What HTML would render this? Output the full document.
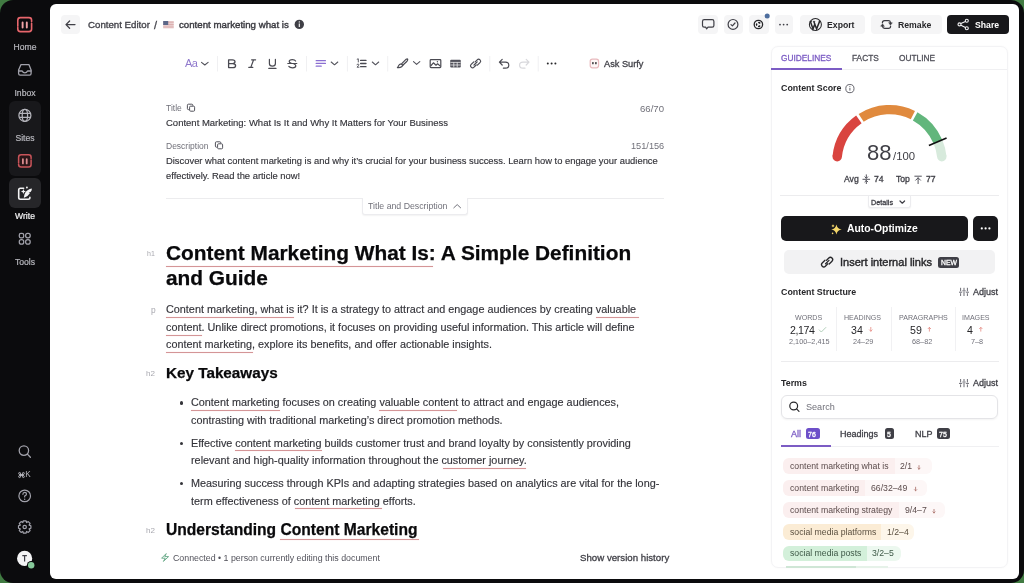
<!DOCTYPE html>
<html><head><meta charset="utf-8"><style>
html,body{margin:0;padding:0;width:1024px;height:583px;overflow:hidden;background:#417b42;}
#root{position:relative;width:1024px;height:583px;overflow:hidden;font-family:"Liberation Sans",sans-serif;}
.t{position:absolute;white-space:nowrap;line-height:1;will-change:transform;}
.a{position:absolute;}
.frame{position:absolute;left:0;top:0;width:1024px;height:583px;background:#0b0b0d;border-radius:13px;}
.panel{position:absolute;left:50px;top:4px;width:969px;height:575px;background:#fff;border-radius:6px;}
.sbbox{position:absolute;left:9px;width:31.5px;background:#18181b;border-radius:6px;}
.ib{position:absolute;top:15px;height:18.5px;background:#f5f5f6;border-radius:4px;}
.ul{position:absolute;height:1.3px;background:#d49597;box-shadow:0 0 1px rgba(240,140,140,0.5);}
.card{position:absolute;left:770.5px;top:46px;width:237px;height:522px;border:1px solid #f3f3f5;border-radius:7px;box-sizing:border-box;box-shadow:0 0 2px rgba(0,0,0,0.035);}
.sep{position:absolute;height:1px;background:#ececee;}
svg{position:absolute;overflow:visible;}
.pill{position:absolute;height:15.5px;border-radius:6px;overflow:hidden;}
.pill .l{position:absolute;left:0;top:0;bottom:0;}
.pill .r{position:absolute;top:0;bottom:0;right:0;}
.badge{position:absolute;height:10.5px;border-radius:2.5px;}

</style></head><body><div id="root">
<div class="frame"></div>
<div class="panel"></div>
<!-- sidebar boxes -->
<div class="sbbox" style="top:100.5px;height:75px;"></div>
<div class="sbbox" style="top:178px;height:30px;background:#262629;"></div>
<!-- header back btn -->
<div class="ib" style="left:61px;width:19px;"></div>
<!-- icon buttons -->
<div class="ib" style="left:698px;width:19.5px;"></div>
<div class="ib" style="left:723.5px;width:19.5px;"></div>
<div class="ib" style="left:749px;width:19.5px;"></div>
<div class="ib" style="left:774.5px;width:18.5px;"></div>
<div class="ib" style="left:799.5px;width:65px;"></div>
<div class="ib" style="left:870.5px;width:71px;"></div>
<div class="ib" style="left:947px;width:62px;top:14.8px;height:19.6px;background:#18181b;border-radius:4px;"></div>
<!-- title desc separator -->
<div class="sep" style="left:166px;top:197.5px;width:498px;"></div>
<div class="a" style="left:362px;top:198px;width:105.5px;height:16.5px;background:#fff;border:1px solid #ececef;border-top:none;box-sizing:border-box;border-radius:0 0 3px 3px;box-shadow:0 1px 1.5px rgba(0,0,0,0.05);"></div>
<!-- card -->
<div class="card"></div>
<div class="sep" style="left:771px;top:68.5px;width:236px;background:#f0f0f2;"></div>
<div class="a" style="left:770.5px;top:67.5px;width:71.5px;height:2px;background:#7c5cc4;"></div>
<div class="sep" style="left:779.5px;top:195px;width:219px;"></div>
<div class="a" style="left:868px;top:195.5px;width:43px;height:12.8px;background:#fff;border:1px solid #ececef;border-top:none;box-sizing:border-box;border-radius:0 0 3px 3px;box-shadow:0 1px 1.5px rgba(0,0,0,0.05);"></div>
<div class="a" style="left:780.5px;top:216px;width:187.5px;height:24.7px;background:#18181b;border-radius:5px;"></div>
<div class="a" style="left:973.3px;top:216px;width:24.7px;height:24.7px;background:#18181b;border-radius:5px;"></div>
<div class="a" style="left:783.6px;top:249.7px;width:211px;height:24.6px;background:#f2f2f3;border-radius:5px;"></div>
<div class="badge" style="left:938px;top:257.2px;width:21.2px;background:#3f3f46;"></div>
<div class="sep" style="left:836px;top:307px;width:1px;height:44px;background:#f1f1f3;"></div>
<div class="sep" style="left:890.5px;top:307px;width:1px;height:44px;background:#f1f1f3;"></div>
<div class="sep" style="left:954.5px;top:307px;width:1px;height:44px;background:#f1f1f3;"></div>
<div class="sep" style="left:780.5px;top:360.5px;width:218px;"></div>
<div class="a" style="left:780.5px;top:394.8px;width:217.8px;height:24.6px;border:1px solid #e4e4e7;border-radius:6px;box-sizing:border-box;box-shadow:0 1px 2px rgba(0,0,0,0.05);"></div>
<div class="sep" style="left:780.5px;top:446px;width:218px;background:#f0f0f2;"></div>
<div class="a" style="left:780.5px;top:445px;width:50px;height:2px;background:#7c5cc4;"></div>
<div class="badge" style="left:806.3px;top:428px;width:13.6px;background:#6d4fc9;"></div>
<div class="badge" style="left:884.8px;top:428px;width:9.3px;background:#3f3f46;"></div>
<div class="badge" style="left:936.7px;top:428px;width:13.6px;background:#3f3f46;"></div>
<!-- pills -->
<div class="pill" style="left:783px;top:458px;width:149px;"><div class="l" style="width:112.4px;background:#fbefef;"></div><div class="r" style="left:112.4px;background:#fdf7f7;"></div></div>
<div class="pill" style="left:783px;top:480px;width:144.4px;"><div class="l" style="width:81.7px;background:#fbefef;"></div><div class="r" style="left:81.7px;background:#fdf7f7;"></div></div>
<div class="pill" style="left:783px;top:502px;width:162px;"><div class="l" style="width:116px;background:#fbefef;"></div><div class="r" style="left:116px;background:#fdf7f7;"></div></div>
<div class="pill" style="left:783px;top:524.3px;width:131.4px;"><div class="l" style="width:98.2px;background:#fbecd5;"></div><div class="r" style="left:98.2px;background:#fdf6ea;"></div></div>
<div class="pill" style="left:783px;top:545.6px;width:118.4px;"><div class="l" style="width:84px;background:#d3f0da;"></div><div class="r" style="left:84px;background:#ecf8ef;"></div></div>
<div class="a" style="left:786px;top:566.4px;width:70px;height:1.2px;background:#cfe6d6;"></div><div class="a" style="left:856px;top:566.4px;width:32px;height:1.2px;background:#e6f2e9;"></div>
<!-- underlines -->
<div class="ul" style="left:166px;top:265.8px;width:267px;"></div>
<div class="ul" style="left:166px;top:316.6px;width:128px;"></div>
<div class="ul" style="left:596.3px;top:316.6px;width:42.5px;"></div>
<div class="ul" style="left:166px;top:334.6px;width:35.5px;"></div>
<div class="ul" style="left:166px;top:351.8px;width:86.5px;"></div>
<div class="ul" style="left:280px;top:539.2px;width:139px;"></div>
<!-- list bullets -->
<div class="a" style="left:179.6px;top:401.4px;width:3.4px;height:3.4px;border-radius:50%;background:#34343a;"></div>
<div class="a" style="left:179.6px;top:441.7px;width:3.4px;height:3.4px;border-radius:50%;background:#34343a;"></div>
<div class="a" style="left:179.6px;top:481.8px;width:3.4px;height:3.4px;border-radius:50%;background:#34343a;"></div>
<div class="ul" style="left:191px;top:409.7px;width:88.5px;"></div>
<div class="ul" style="left:379.2px;top:409.7px;width:77.7px;"></div>
<div class="ul" style="left:235px;top:450.1px;width:87px;"></div>
<div class="ul" style="left:442.7px;top:468.1px;width:83px;"></div>
<div class="ul" style="left:295px;top:507.5px;width:86.7px;"></div>

<svg width="1024" height="583" viewBox="0 0 1024 583" style="left:0;top:0"><!-- sidebar logo home -->
<g fill="none" stroke="#e8666c" stroke-width="1.6" stroke-linecap="round">
  <path d="M17.8 26.2 V20.2 Q17.8 17.6 20.4 17.6 H29 Q31.6 17.6 31.6 20.2 V21.6"/>
  <path d="M31.6 23.2 V29 Q31.6 31.6 29 31.6 H20.4 Q17.8 31.6 17.8 29 V27.6"/>
  <path d="M22.6 22.4 V27.6 M26.8 22.4 V27.6" stroke-width="1.9" stroke="#f0a3a6"/>
</g>
<!-- inbox -->
<g fill="none" stroke="#a1a1aa" stroke-width="1.3" stroke-linejoin="round" stroke-linecap="round">
  <path d="M21 64.6 H28.9 L31.1 70 V73.6 Q31.1 75.2 29.5 75.2 H20.2 Q18.6 75.2 18.6 73.6 V70 Z"/>
  <path d="M18.8 71 H22.2 Q23 72.8 24.85 72.8 Q26.7 72.8 27.5 71 H31"/>
</g>
<!-- globe -->
<g fill="none" stroke="#b4b4bb" stroke-width="1.25">
  <circle cx="24.9" cy="115.4" r="6"/>
  <ellipse cx="24.9" cy="115.4" rx="2.7" ry="6"/>
  <path d="M19.2 113.4 H30.6 M19.2 117.4 H30.6"/>
</g>
<!-- logo small (sites) -->
<rect x="18.6" y="154.8" width="12.5" height="12.3" rx="2.5" fill="#2a1618"/>
<g fill="none" stroke="#c8545a" stroke-width="1.5" stroke-linecap="round">
  <path d="M18.6 163 V157.3 Q18.6 154.8 21.1 154.8 H28.6 Q31.1 154.8 31.1 157.3 V158.5"/>
  <path d="M31.1 159.9 V164.6 Q31.1 167.1 28.6 167.1 H21.1 Q18.6 167.1 18.6 164.6 V164.2"/>
  <path d="M22.9 159.2 V163.4 M26.7 159.2 V163.4" stroke-width="1.8" stroke="#d98a8e"/>
</g>
<!-- write icon -->
<g fill="none" stroke="#f4f4f5" stroke-width="1.6" stroke-linecap="round">
  <path d="M23.6 188.2 H20.4 Q18.7 188.2 18.7 189.9 V197.6 Q18.7 199.3 20.4 199.3 H28.2 Q29.9 199.3 29.9 197.6 V197.4"/>
</g>
<path d="M23.4 189 L24.1 190.8 L25.9 191.5 L24.1 192.2 L23.4 194 L22.7 192.2 L20.9 191.5 L22.7 190.8 Z" fill="#f4f4f5"/>
<circle cx="26.9" cy="187.5" r="0.95" fill="#f4f4f5"/>
<path d="M23.8 197.8 Q24.2 192.6 27.6 190.2 Q29.8 188.6 31.9 188.4 Q31.9 190.4 30.6 191.9 L28.6 192.5 L30 193.1 Q28.2 196.4 24.6 197.4 Z" fill="#f4f4f5"/>
<!-- tools -->
<g fill="none" stroke="#a1a1aa" stroke-width="1.25">
  <rect x="19.3" y="233.4" width="4.4" height="4.4" rx="1.6"/>
  <rect x="25.6" y="233.4" width="4.6" height="4.4" rx="2"/>
  <rect x="19.3" y="239.6" width="4.4" height="4.6" rx="2"/>
  <rect x="25.6" y="239.6" width="4.6" height="4.6" rx="2.2"/>
</g>
<!-- search -->
<g fill="none" stroke="#a1a1aa" stroke-width="1.3" stroke-linecap="round">
  <circle cx="23.9" cy="450.6" r="4.7"/>
  <path d="M27.4 454.1 L30.4 457.2"/>
</g>
<!-- help -->
<g fill="none" stroke="#a1a1aa" stroke-width="1.2" stroke-linecap="round">
  <circle cx="24.7" cy="495.9" r="5.8"/>
  <path d="M22.9 494.3 Q22.9 492.4 24.7 492.4 Q26.5 492.4 26.5 494.1 Q26.5 495.3 24.7 496 V497"/>
</g>
<circle cx="24.7" cy="499.2" r="0.7" fill="#a1a1aa"/>
<!-- gear -->
<g fill="none" stroke="#a1a1aa" stroke-width="1.2" stroke-linejoin="round">
  <path d="M23.4 520.8 H26 L26.6 522.6 L28.3 521.6 L30.1 523.4 L29.1 525.1 L30.9 525.7 V528.3 L29.1 528.9 L30.1 530.6 L28.3 532.4 L26.6 531.4 L26 533.2 H23.4 L22.8 531.4 L21.1 532.4 L19.3 530.6 L20.3 528.9 L18.5 528.3 V525.7 L20.3 525.1 L19.3 523.4 L21.1 521.6 L22.8 522.6 Z"/>
  <circle cx="24.7" cy="527" r="1.7"/>
</g>
<!-- avatar -->
<circle cx="24.6" cy="558.4" r="7.6" fill="#f4f4f5"/>
<path d="M22.3 555.6 H26.9 M24.6 555.6 V561.4" stroke="#3f3f46" stroke-width="1.2" fill="none"/>
<circle cx="31.2" cy="565.3" r="4.3" fill="#0b0b0d"/>
<circle cx="31.2" cy="565.3" r="3.2" fill="#86c99a"/>
<!-- header: back arrow -->
<g fill="none" stroke="#3f3f46" stroke-width="1.3" stroke-linecap="round" stroke-linejoin="round">
  <path d="M66 24.6 H75 M69.6 21 L66 24.6 L69.6 28.2"/>
</g>
<!-- flag -->
<rect x="163.2" y="21" width="10.5" height="7.4" fill="#e9cfcf"/>
<path d="M163.2 22.2 H173.7 M163.2 24.6 H173.7 M163.2 27 H173.7" stroke="#d9a9a9" stroke-width="0.9"/>
<rect x="163.2" y="21" width="5" height="4" fill="#5b6788"/>
<!-- info filled -->
<circle cx="299.3" cy="24.4" r="4.7" fill="#3f3f46"/>
<path d="M299.3 23.5 V27" stroke="#fff" stroke-width="1.1"/>
<circle cx="299.3" cy="21.9" r="0.65" fill="#fff"/>
<!-- chat bubble -->
<g fill="none" stroke="#3f3f46" stroke-width="1.2" stroke-linejoin="round">
  <path d="M704.2 19.7 H712.2 Q713.9 19.7 713.9 21.4 V25.4 Q713.9 27.1 712.2 27.1 H708 L706.6 28.8 L705.6 27.1 H704.2 Q702.5 27.1 702.5 25.4 V21.4 Q702.5 19.7 704.2 19.7 Z"/>
</g>
<!-- circle check -->
<g fill="none" stroke="#3f3f46" stroke-width="1.2" stroke-linecap="round" stroke-linejoin="round">
  <circle cx="733" cy="24.4" r="4.9"/>
  <path d="M731 24.6 L732.4 25.9 L735 23"/>
</g>
<!-- btn3 icon -->
<circle cx="758.4" cy="24.5" r="4.2" fill="none" stroke="#27272a" stroke-width="1.3"/>
<ellipse cx="759.3" cy="22.8" rx="1.3" ry="0.75" transform="rotate(25 759.3 22.8)" fill="#18181b"/>
<ellipse cx="756.6" cy="24.6" rx="1.3" ry="0.75" transform="rotate(90 756.6 24.6)" fill="#18181b"/>
<ellipse cx="759.2" cy="26.2" rx="1.3" ry="0.75" transform="rotate(-25 759.2 26.2)" fill="#18181b"/>
<circle cx="767.2" cy="16" r="2.5" fill="#4e6e9e"/>
<!-- more dots -->
<g fill="#3f3f46"><circle cx="780" cy="24.6" r="0.9"/><circle cx="783.6" cy="24.6" r="0.9"/><circle cx="787.2" cy="24.6" r="0.9"/></g>
<!-- WP logo -->
<circle cx="815.4" cy="24.5" r="6" fill="none" stroke="#27272a" stroke-width="1.05"/>
<path d="M810.4 21.6 L813 29 L815 23.4 M813.8 21.6 L816.6 29 L819.6 21.4" fill="none" stroke="#27272a" stroke-width="1.5" stroke-linejoin="miter"/>
<path d="M809.6 21.4 H812 M812.9 21.4 H815.2" stroke="#27272a" stroke-width="0.8"/>
<circle cx="819.7" cy="21.5" r="0.9" fill="#27272a"/>
<!-- remake icon -->
<g fill="none" stroke="#3a3a40" stroke-width="1.2" stroke-linecap="round" stroke-linejoin="round">
  <path d="M882.4 22.8 Q882.4 20.7 884.6 20.7 H888.4 Q890.2 20.7 890.6 22.6"/>
  <path d="M890.6 26.2 Q890.6 28.3 888.4 28.3 H884.6 Q882.8 28.3 882.4 26.4"/>
</g>
<path d="M888.6 22.6 L892.4 22.8 L890.4 25.2 Z" fill="#3a3a40" stroke="#3a3a40" stroke-width="0.4" stroke-linejoin="round"/>
<path d="M884.4 26.4 L880.6 26.2 L882.6 23.8 Z" fill="#3a3a40" stroke="#3a3a40" stroke-width="0.4" stroke-linejoin="round"/>
<!-- share icon -->
<g fill="none" stroke="#f4f4f5" stroke-width="1.1">
  <circle cx="966.8" cy="20.8" r="1.5"/><circle cx="959.5" cy="24.4" r="1.5"/><circle cx="966.8" cy="28.2" r="1.5"/>
  <path d="M960.9 23.6 L965.4 21.5 M960.9 25.2 L965.4 27.5"/>
</g>
<!-- toolbar -->
<g fill="none" stroke="#52525b" stroke-width="1.1" stroke-linecap="round" stroke-linejoin="round">
  <path d="M201.5 62.4 L204.8 65 L208.1 62.4"/>
  <path d="M331.2 62 L334.5 64.8 L337.8 62"/>
  <path d="M372.3 62 L375.5 64.8 L378.7 62"/>
  <path d="M413.5 61.6 L416.6 64.4 L419.8 61.6"/>
</g>
<g stroke="#f0f0f2" stroke-width="1"><path d="M217.5 56 V71.5 M306.5 56 V71.5 M347.4 56 V71.5 M387.7 56 V71.5 M489.8 56 V71.5 M538.2 56 V71.5"/></g>
<!-- B -->
<path d="M228.6 59.8 H232.4 Q235 59.8 235 61.8 Q235 63.5 232.6 63.6 Q235.6 63.7 235.6 65.7 Q235.6 67.6 232.8 67.6 H228.6 Z M228.6 63.6 H232.6" fill="none" stroke="#4a4a52" stroke-width="1.3" stroke-linejoin="round"/>
<!-- I -->
<path d="M251.6 59.8 H255.6 M248.8 67.4 H252.8 M253.6 59.8 L250.8 67.4" fill="none" stroke="#4a4a52" stroke-width="1.2" stroke-linecap="round"/>
<!-- U -->
<path d="M269.4 59.4 V63.6 Q269.4 66.2 272.4 66.2 Q275.4 66.2 275.4 63.6 V59.4 M268.8 68.4 H276" fill="none" stroke="#4a4a52" stroke-width="1.2" stroke-linecap="round"/>
<!-- S -->
<path d="M295.6 61 Q294.8 59.6 292.4 59.6 Q289.2 59.6 289.2 61.6 Q289.2 62.8 291 63.2 M294 64 Q295.8 64.6 295.8 65.8 Q295.8 67.8 292.6 67.8 Q289.8 67.8 288.8 66.4 M287.8 63.5 H296.8" fill="none" stroke="#4a4a52" stroke-width="1.2" stroke-linecap="round"/>
<!-- align -->
<path d="M316.2 60.7 H325.4 M316.2 63.4 H325.4 M316.2 66.2 H321.2" stroke="#8b6fd1" stroke-width="1.3" stroke-linecap="round"/>
<!-- list -->
<path d="M360.6 60.4 H366 M360.6 63.5 H366 M360.6 66.7 H366" stroke="#4a4a52" stroke-width="1.3" stroke-linecap="round"/>
<path d="M357.2 59.2 L358.3 58.8 V62 M357 64.8 Q357.2 64 358 64 Q358.9 64 358.9 64.8 Q358.9 65.4 357 67.2 H359" fill="none" stroke="#4a4a52" stroke-width="0.9" stroke-linecap="round" stroke-linejoin="round"/>
<!-- brush -->
<g fill="none" stroke="#4a4a52" stroke-width="1.2" stroke-linecap="round" stroke-linejoin="round">
  <path d="M402 63.4 L406.2 59.2 Q407.4 58.4 407.7 59.2 Q407.9 60 407 61.2 L402.8 65.2"/>
  <path d="M401.2 63.8 Q399.2 64 398.6 65.6 Q398.2 66.8 397.4 67.6 Q400 68 401.6 66.8 Q402.6 65.8 402.8 65.2 Z"/>
</g>
<!-- image -->
<g fill="none" stroke="#4a4a52" stroke-width="1.2" stroke-linejoin="round">
  <rect x="430.2" y="59.6" width="10.6" height="8" rx="0.8"/>
  <path d="M430.6 66 L433.4 62.8 L436 65.2 L437.6 63.8 L440.6 66.4"/>
</g>
<circle cx="437.4" cy="61.8" r="0.7" fill="#4a4a52"/>
<!-- table -->
<rect x="450.2" y="59.8" width="10.6" height="7.8" rx="1" fill="#52525b"/>
<path d="M450.4 62.4 H460.6 M450.4 65 H460.6 M453.8 62.4 V67.4 M457.2 62.4 V67.4" stroke="#fff" stroke-width="0.7"/>
<!-- link -->
<g fill="none" stroke="#4a4a52" stroke-width="1.2" stroke-linecap="round">
  <path d="M475.2 61.8 L477.2 59.8 Q478.6 58.4 480 59.8 Q481.4 61.2 480 62.6 L477.4 65.2"/>
  <path d="M476.2 65 L474 67.2 Q472.6 68.6 471.2 67.2 Q469.8 65.8 471.2 64.4 L473.8 61.8"/>
  <path d="M474 65 L477.2 61.8"/>
</g>
<!-- undo / redo -->
<g fill="none" stroke-width="1.2" stroke-linecap="round" stroke-linejoin="round">
  <path d="M502.2 59.4 L499.4 62.2 L502.2 65 M499.6 62.2 H505.4 Q508.8 62.2 508.8 65.2 Q508.8 68.2 505.4 68.2 H503.4" stroke="#4a4a52"/>
  <path d="M526.2 59.4 L529 62.2 L526.2 65 M528.8 62.2 H523 Q519.6 62.2 519.6 65.2 Q519.6 68.2 523 68.2 H525" stroke="#d8d8dc"/>
</g>
<g fill="#27272a"><circle cx="547.8" cy="63.6" r="1"/><circle cx="551.6" cy="63.6" r="1"/><circle cx="555.4" cy="63.6" r="1"/></g>
<!-- surfy -->
<rect x="590.2" y="59.2" width="8.4" height="8.6" rx="2.2" fill="#fdf6f6" stroke="#e8b9bd" stroke-width="1.2"/>
<rect x="592.2" y="61.9" width="1.4" height="2.4" rx="0.6" fill="#27272a"/>
<rect x="595.2" y="61.9" width="1.4" height="2.4" rx="0.6" fill="#27272a"/>
<!-- cmd glyph -->
<g fill="none" stroke="#b8b8be" stroke-width="0.9">
  <path d="M20.4 473.6 V476.4 M22.6 473.6 V476.4 M19.4 474.5 H23.6 M19.4 475.5 H23.6"/>
  <circle cx="19.6" cy="473.4" r="0.95"/><circle cx="23.4" cy="473.4" r="0.95"/>
  <circle cx="19.6" cy="476.6" r="0.95"/><circle cx="23.4" cy="476.6" r="0.95"/>
</g>
<!-- gauge -->
<path d="M837.19 156.70 A52.6 52.6 0 0 1 858.88 119.43" stroke="#d9443f" stroke-width="9.4" fill="none"/>
<circle cx="837.19" cy="156.70" r="4.7" fill="#d9443f"/>
<path d="M861.16 117.89 A52.6 52.6 0 0 1 912.89 115.09" stroke="#e08a3e" stroke-width="9.4" fill="none"/>
<path d="M915.16 116.28 A52.6 52.6 0 0 1 937.92 141.65" stroke="#62b67c" stroke-width="9.4" fill="none"/>
<path d="M937.92 141.65 A52.6 52.6 0 0 1 941.81 156.70" stroke="#d7eadc" stroke-width="9.4" fill="none"/>
<circle cx="941.81" cy="156.70" r="4.7" fill="#d7eadc"/>
<path d="M928.90 145.48 L946.57 137.97" stroke="#111" stroke-width="1.6"/><!-- copy icons -->
<g fill="none" stroke="#52525b" stroke-width="1" stroke-linejoin="round">
  <path d="M189 109.6 H188.4 Q187.4 109.6 187.4 108.6 V105.2 Q187.4 104.2 188.4 104.2 H191.8 Q192.8 104.2 192.8 105.2 V105.8"/>
  <rect x="189.6" y="106.2" width="5" height="5" rx="1"/>
  <path d="M217 147.2 H216.4 Q215.4 147.2 215.4 146.2 V142.8 Q215.4 141.8 216.4 141.8 H219.8 Q220.8 141.8 220.8 142.8 V143.4"/>
  <rect x="217.6" y="143.8" width="5" height="5" rx="1"/>
</g>
<!-- pill chevron up -->
<path d="M453.8 207.8 L457.2 204.6 L460.6 207.8" fill="none" stroke="#71717a" stroke-width="1" stroke-linecap="round" stroke-linejoin="round"/>
<!-- lightning -->
<path d="M166.2 553.6 L161.6 558.2 H165.2 L163.4 561.4 L168.6 556.6 H164.8 Z" fill="none" stroke="#6fae8e" stroke-width="1" stroke-linejoin="round"/>
<!-- content score info -->
<circle cx="849.9" cy="88.6" r="4.1" fill="none" stroke="#52525b" stroke-width="0.9"/>
<path d="M849.9 87.8 V90.6" stroke="#52525b" stroke-width="0.9"/>
<circle cx="849.9" cy="86.4" r="0.5" fill="#52525b"/>
<!-- avg icon -->
<g fill="none" stroke="#52525b" stroke-width="1" stroke-linecap="round" stroke-linejoin="round">
  <path d="M862.9 179.3 H869.7 M866.3 174.8 V178.2 M864.9 176.9 L866.3 178.3 L867.7 176.9 M866.3 180.4 V183.6 M864.9 181.8 L866.3 180.4 L867.7 181.8"/>
  <path d="M914.8 176.2 H921.4 M918.1 177.8 V183.6 M915.7 180.2 L918.1 177.8 L920.5 180.2"/>
</g>
<!-- details chevron -->
<path d="M900 201 L902.3 203.2 L904.6 201" fill="none" stroke="#3f3f46" stroke-width="1.2" stroke-linecap="round" stroke-linejoin="round"/>
<!-- sparkle -->
<path d="M836.4 224.6 Q837.2 229 841.8 229.6 Q837.2 230.2 836.4 234.6 Q835.6 230.2 831.2 229.6 Q835.6 229 836.4 224.6 Z" fill="#f4d66a"/>
<path d="M833 224.2 Q833.3 225.6 834.6 225.9 Q833.3 226.2 833 227.6 Q832.7 226.2 831.4 225.9 Q832.7 225.6 833 224.2 Z" fill="#f4d66a"/>
<circle cx="832.6" cy="233.4" r="0.8" fill="#f4d66a"/>
<!-- more dots in button -->
<g fill="#fff"><circle cx="981.8" cy="228.4" r="1.1"/><circle cx="985.6" cy="228.4" r="1.1"/><circle cx="989.4" cy="228.4" r="1.1"/></g>
<!-- insert link icon -->
<g fill="none" stroke="#27272a" stroke-width="1.3" stroke-linecap="round">
  <path d="M826.6 260.2 L828.8 258 Q830.4 256.4 832 258 Q833.6 259.6 832 261.2 L829.2 264"/>
  <path d="M827.8 263.8 L825.4 266.2 Q823.8 267.8 822.2 266.2 Q820.6 264.6 822.2 263 L825 260.2"/>
  <path d="M825.6 263.8 L829 260.4"/>
</g>
<!-- adjust icons -->
<g stroke="#52525b" stroke-width="0.85" stroke-linecap="round">
  <path d="M960.6 288.2 V290.8 M960.6 293.6 V295.6 M959.4 292.2 H961.8"/>
  <path d="M964 288.2 V289.6 M964 292 V295.6 M962.8 290.8 H965.2"/>
  <path d="M967.4 288.2 V290.8 M967.4 293.6 V295.6 M966.2 292.2 H968.6"/>
  <path d="M960.6 379.4 V382 M960.6 384.8 V386.8 M959.4 383.4 H961.8"/>
  <path d="M964 379.4 V380.8 M964 383.2 V386.8 M962.8 382 H965.2"/>
  <path d="M967.4 379.4 V382 M967.4 384.8 V386.8 M966.2 383.4 H968.6"/>
</g>
<!-- stats marks -->
<path d="M819.2 329.9 L821.3 332 L825.8 327.5" fill="none" stroke="#a9c9b2" stroke-width="0.9" stroke-linecap="round" stroke-linejoin="round"/>
<g fill="none" stroke="#e58f88" stroke-width="0.85" stroke-linecap="round" stroke-linejoin="round">
  <path d="M870.8 327.4 V331.2 M869.5 329.9 L870.8 331.2 L872.1 329.9"/>
  <path d="M929.4 331.2 V327.4 M928.1 328.7 L929.4 327.4 L930.7 328.7"/>
  <path d="M980.8 331.2 V327.4 M979.5 328.7 L980.8 327.4 L982.1 328.7"/>
</g>
<!-- search icon -->
<g fill="none" stroke="#27272a" stroke-width="1.2" stroke-linecap="round">
  <circle cx="793.7" cy="406" r="3.9"/>
  <path d="M796.6 408.9 L799 411.3"/>
</g>
<!-- pill arrows -->
<g fill="none" stroke="#b07a74" stroke-width="0.9" stroke-linecap="round" stroke-linejoin="round">
  <path d="M919 465.6 V469.2 M917.9 468.1 L919 469.2 L920.1 468.1"/>
  <path d="M915.6 487.2 V490.8 M914.5 489.7 L915.6 490.8 L916.7 489.7"/>
  <path d="M934 509.4 V513 M932.9 511.9 L934 513 L935.1 511.9"/>
</g>
</svg>
<span class="t" id="sb_home" style="top:43.42px;font-size:8.6px;font-weight:400;color:#b8b8be;letter-spacing:0.000px;-webkit-text-stroke:0.2px #b8b8be;left:25px;transform:translateX(-50%);">Home</span>
<span class="t" id="sb_inbox" style="top:88.72px;font-size:8.6px;font-weight:400;color:#b8b8be;letter-spacing:0.000px;-webkit-text-stroke:0.2px #b8b8be;left:25px;transform:translateX(-50%);">Inbox</span>
<span class="t" id="sb_sites" style="top:134.02px;font-size:8.6px;font-weight:400;color:#b8b8be;letter-spacing:0.000px;-webkit-text-stroke:0.2px #b8b8be;left:25px;transform:translateX(-50%);">Sites</span>
<span class="t" id="sb_write" style="top:212.22px;font-size:8.6px;font-weight:400;color:#f4f4f5;letter-spacing:0.000px;-webkit-text-stroke:0.2px #f4f4f5;left:25px;transform:translateX(-50%);">Write</span>
<span class="t" id="sb_tools" style="top:257.52px;font-size:8.6px;font-weight:400;color:#b8b8be;letter-spacing:0.000px;-webkit-text-stroke:0.2px #b8b8be;left:25px;transform:translateX(-50%);">Tools</span>
<span class="t" id="sb_k" style="top:470.86px;font-size:8.2px;font-weight:400;color:#b8b8be;letter-spacing:0.000px;left:28.4px;transform:translateX(-50%);">K</span>
<span class="t" id="h_ce" style="top:19.79px;font-size:9.7px;font-weight:400;color:#45454c;letter-spacing:0.000px;-webkit-text-stroke:0.3px currentColor;-webkit-text-stroke:0.35px #45454c;left:88px;">Content Editor</span>
<span class="t" id="h_sl" style="top:19.69px;font-size:11px;font-weight:400;color:#45454c;letter-spacing:0.000px;-webkit-text-stroke:0.3px currentColor;left:154.4px;">/</span>
<span class="t" id="h_kw" style="top:19.69px;font-size:9.7px;font-weight:400;color:#3a3a40;letter-spacing:0.000px;-webkit-text-stroke:0.3px currentColor;-webkit-text-stroke:0.4px #3a3a40;left:178.9px;">content marketing what is</span>
<span class="t" id="b_exp" style="top:20.94px;font-size:8.7px;font-weight:600;color:#27272a;letter-spacing:0.000px;left:826.5px;">Export</span>
<span class="t" id="b_rem" style="top:20.94px;font-size:8.7px;font-weight:600;color:#27272a;letter-spacing:0.000px;left:897.5px;">Remake</span>
<span class="t" id="b_sh" style="top:20.94px;font-size:8.7px;font-weight:600;color:#ffffff;letter-spacing:0.000px;left:975px;">Share</span>
<span class="t" id="tb_aa" style="top:57.89px;font-size:11.0px;font-weight:400;color:#8f78cc;letter-spacing:-0.700px;left:185.2px;">Aa</span>
<span class="t" id="tb_ask" style="top:60.00px;font-size:9.22px;font-weight:400;color:#3f3f46;letter-spacing:0.000px;-webkit-text-stroke:0.3px currentColor;left:604.2px;">Ask Surfy</span>
<span class="t" id="td_tl" style="top:103.50px;font-size:8.5px;font-weight:400;color:#71717a;letter-spacing:0.000px;left:166.2px;">Title</span>
<span class="t" id="td_tc" style="top:103.87px;font-size:9.6px;font-weight:400;color:#71717a;letter-spacing:0.000px;right:360px;">66/70</span>
<span class="t" id="td_tt" style="top:117.76px;font-size:9.5px;font-weight:400;color:#34343a;letter-spacing:0.000px;-webkit-text-stroke:0.15px #34343a;left:166.2px;">Content Marketing: What Is It and Why It Matters for Your Business</span>
<span class="t" id="td_dl" style="top:141.50px;font-size:8.5px;font-weight:400;color:#71717a;letter-spacing:0.000px;left:166px;">Description</span>
<span class="t" id="td_dc" style="top:142.01px;font-size:9.2px;font-weight:400;color:#71717a;letter-spacing:0.000px;right:360px;">151/156</span>
<span class="t" id="td_d1" style="top:155.74px;font-size:9.4px;font-weight:400;color:#34343a;letter-spacing:0.000px;-webkit-text-stroke:0.15px #34343a;left:166px;">Discover what content marketing is and why it’s crucial for your business success. Learn how to engage your audience</span>
<span class="t" id="td_d2" style="top:170.84px;font-size:9.4px;font-weight:400;color:#34343a;letter-spacing:0.000px;-webkit-text-stroke:0.15px #34343a;left:166px;">effectively. Read the article now!</span>
<span class="t" id="td_pill" style="top:201.78px;font-size:8.76px;font-weight:400;color:#71717a;letter-spacing:0.000px;left:368.1px;">Title and Description</span>
<span class="t" id="e_h1m" style="top:250.26px;font-size:7.02px;font-weight:400;color:#a9a9b0;letter-spacing:0.000px;left:147px;">h1</span>
<span class="t" id="e_h1a" style="top:242.85px;font-size:20.85px;font-weight:700;color:#09090b;letter-spacing:0.000px;-webkit-text-stroke:0.25px #09090b;left:166.25px;">Content Marketing What Is: A Simple Definition</span>
<span class="t" id="e_h1b" style="top:267.55px;font-size:20.85px;font-weight:700;color:#09090b;letter-spacing:0.000px;-webkit-text-stroke:0.25px #09090b;left:166.25px;">and Guide</span>
<span class="t" id="e_pm" style="top:306.39px;font-size:8.4px;font-weight:400;color:#a9a9b0;letter-spacing:0.000px;left:150.6px;">p</span>
<span class="t" id="e_p1" style="top:304.32px;font-size:10.84px;font-weight:400;color:#34343a;letter-spacing:0.000px;-webkit-text-stroke:0.15px #34343a;left:166px;">Content marketing, what is it? It is a strategy to attract and engage audiences by creating valuable</span>
<span class="t" id="e_p2" style="top:321.82px;font-size:10.84px;font-weight:400;color:#34343a;letter-spacing:0.000px;-webkit-text-stroke:0.15px #34343a;left:166px;">content. Unlike direct promotions, it focuses on providing useful information. This article will define</span>
<span class="t" id="e_p3" style="top:339.42px;font-size:10.84px;font-weight:400;color:#34343a;letter-spacing:0.000px;-webkit-text-stroke:0.15px #34343a;left:166px;">content marketing, explore its benefits, and offer actionable insights.</span>
<span class="t" id="e_h2m" style="top:369.94px;font-size:8.1px;font-weight:400;color:#a9a9b0;letter-spacing:0.000px;left:146px;">h2</span>
<span class="t" id="e_h2a" style="top:365.18px;font-size:15.26px;font-weight:700;color:#09090b;letter-spacing:0.000px;-webkit-text-stroke:0.25px #09090b;left:166.4px;">Key Takeaways</span>
<span class="t" id="e_l1a" style="top:397.42px;font-size:10.84px;font-weight:400;color:#34343a;letter-spacing:0.000px;-webkit-text-stroke:0.15px #34343a;left:191px;">Content marketing focuses on creating valuable content to attract and engage audiences,</span>
<span class="t" id="e_l1b" style="top:414.62px;font-size:10.84px;font-weight:400;color:#34343a;letter-spacing:0.000px;-webkit-text-stroke:0.15px #34343a;left:191px;">contrasting with traditional marketing’s direct promotion methods.</span>
<span class="t" id="e_l2a" style="top:437.82px;font-size:10.84px;font-weight:400;color:#34343a;letter-spacing:0.000px;-webkit-text-stroke:0.15px #34343a;left:191px;">Effective content marketing builds customer trust and brand loyalty by consistently providing</span>
<span class="t" id="e_l2b" style="top:455.32px;font-size:10.84px;font-weight:400;color:#34343a;letter-spacing:0.000px;-webkit-text-stroke:0.15px #34343a;left:191px;">relevant and high-quality information throughout the customer journey.</span>
<span class="t" id="e_l3a" style="top:477.92px;font-size:10.84px;font-weight:400;color:#34343a;letter-spacing:0.000px;-webkit-text-stroke:0.15px #34343a;left:191px;">Measuring success through KPIs and adapting strategies based on analytics are vital for the long-</span>
<span class="t" id="e_l3b" style="top:495.52px;font-size:10.84px;font-weight:400;color:#34343a;letter-spacing:0.000px;-webkit-text-stroke:0.15px #34343a;left:191px;">term effectiveness of content marketing efforts.</span>
<span class="t" id="e_h2bm" style="top:526.54px;font-size:8.1px;font-weight:400;color:#a9a9b0;letter-spacing:0.000px;left:146px;">h2</span>
<span class="t" id="e_h2b" style="top:522.28px;font-size:15.62px;font-weight:700;color:#09090b;letter-spacing:0.000px;-webkit-text-stroke:0.25px #09090b;left:166px;">Understanding Content Marketing</span>
<span class="t" id="f_con" style="top:553.53px;font-size:8.82px;font-weight:400;color:#52525b;letter-spacing:0.000px;left:173.4px;">Connected • 1 person currently editing this document</span>
<span class="t" id="f_ver" style="top:552.81px;font-size:9.68px;font-weight:400;color:#3f3f46;letter-spacing:0.000px;-webkit-text-stroke:0.3px currentColor;left:580.4px;">Show version history</span>
<span class="t" id="r_g" style="top:54.17px;font-size:8.3px;font-weight:400;color:#7c5cc4;letter-spacing:0.000px;-webkit-text-stroke:0.3px currentColor;left:780.8px;">GUIDELINES</span>
<span class="t" id="r_f" style="top:54.17px;font-size:8.3px;font-weight:400;color:#52525b;letter-spacing:0.000px;-webkit-text-stroke:0.3px currentColor;left:852px;">FACTS</span>
<span class="t" id="r_o" style="top:54.17px;font-size:8.3px;font-weight:400;color:#52525b;letter-spacing:0.000px;-webkit-text-stroke:0.3px currentColor;left:898.6px;">OUTLINE</span>
<span class="t" id="r_cs" style="top:83.81px;font-size:8.85px;font-weight:700;color:#27272a;letter-spacing:0.000px;left:780.8px;">Content Score</span>
<span class="t" id="r_88" style="top:141.95px;font-size:22.03px;font-weight:400;color:#3f3f46;letter-spacing:0.000px;left:867.2px;">88</span>
<span class="t" id="r_100" style="top:151.01px;font-size:11.33px;font-weight:400;color:#3f3f46;letter-spacing:0.000px;left:892.5px;">/100</span>
<span class="t" id="r_avg" style="top:174.68px;font-size:8.65px;font-weight:400;color:#3f3f46;letter-spacing:0.000px;-webkit-text-stroke:0.3px currentColor;left:843.6px;">Avg</span>
<span class="t" id="r_74" style="top:174.68px;font-size:8.65px;font-weight:400;color:#3f3f46;letter-spacing:0.000px;-webkit-text-stroke:0.3px currentColor;left:873.7px;">74</span>
<span class="t" id="r_top" style="top:174.68px;font-size:8.65px;font-weight:400;color:#3f3f46;letter-spacing:0.000px;-webkit-text-stroke:0.3px currentColor;left:895.7px;">Top</span>
<span class="t" id="r_77" style="top:174.68px;font-size:8.65px;font-weight:400;color:#3f3f46;letter-spacing:0.000px;-webkit-text-stroke:0.3px currentColor;left:925.9px;">77</span>
<span class="t" id="r_det" style="top:198.51px;font-size:7.2px;font-weight:400;color:#3f3f46;letter-spacing:0.000px;-webkit-text-stroke:0.3px currentColor;left:871.4px;">Details</span>
<span class="t" id="r_ao" style="top:224.23px;font-size:10.36px;font-weight:600;color:#ffffff;letter-spacing:0.000px;left:846.8px;">Auto-Optimize</span>
<span class="t" id="r_il" style="top:256.65px;font-size:11.04px;font-weight:400;color:#27272a;letter-spacing:0.000px;-webkit-text-stroke:0.3px currentColor;-webkit-text-stroke:0.4px #27272a;left:839.6px;">Insert internal links</span>
<span class="t" id="r_new" style="top:259.54px;font-size:6.8px;font-weight:400;color:#ffffff;letter-spacing:0.000px;-webkit-text-stroke:0.3px currentColor;left:940.5px;">NEW</span>
<span class="t" id="r_cst" style="top:287.91px;font-size:8.85px;font-weight:700;color:#27272a;letter-spacing:0.000px;left:781px;">Content Structure</span>
<span class="t" id="r_adj1" style="top:287.78px;font-size:9.0px;font-weight:400;color:#3f3f46;letter-spacing:0.000px;-webkit-text-stroke:0.3px currentColor;left:972.6px;">Adjust</span>
<span class="t" id="r_w" style="top:315.19px;font-size:7.1px;font-weight:400;color:#71717a;letter-spacing:0.000px;left:795.2px;">WORDS</span>
<span class="t" id="r_wv" style="top:324.83px;font-size:10.6px;font-weight:400;color:#27272a;letter-spacing:-0.400px;left:789.6px;">2,174</span>
<span class="t" id="r_wr" style="top:338.12px;font-size:7.3px;font-weight:400;color:#71717a;letter-spacing:0.000px;left:788.5px;">2,100–2,415</span>
<span class="t" id="r_hd" style="top:315.19px;font-size:7.1px;font-weight:400;color:#71717a;letter-spacing:0.000px;left:844.2px;">HEADINGS</span>
<span class="t" id="r_hv" style="top:324.83px;font-size:10.6px;font-weight:400;color:#27272a;letter-spacing:0.000px;left:851px;">34</span>
<span class="t" id="r_hr" style="top:338.12px;font-size:7.3px;font-weight:400;color:#71717a;letter-spacing:0.000px;left:853.2px;">24–29</span>
<span class="t" id="r_pg" style="top:315.19px;font-size:7.1px;font-weight:400;color:#71717a;letter-spacing:0.000px;left:898.6px;">PARAGRAPHS</span>
<span class="t" id="r_pv" style="top:324.83px;font-size:10.6px;font-weight:400;color:#27272a;letter-spacing:0.000px;left:909.8px;">59</span>
<span class="t" id="r_pr" style="top:338.12px;font-size:7.3px;font-weight:400;color:#71717a;letter-spacing:0.000px;left:911.6px;">68–82</span>
<span class="t" id="r_im" style="top:315.19px;font-size:7.1px;font-weight:400;color:#71717a;letter-spacing:0.000px;left:962px;">IMAGES</span>
<span class="t" id="r_iv" style="top:324.83px;font-size:10.6px;font-weight:400;color:#27272a;letter-spacing:0.000px;left:967.1px;">4</span>
<span class="t" id="r_ir" style="top:338.12px;font-size:7.3px;font-weight:400;color:#71717a;letter-spacing:0.000px;left:970.5px;">7–8</span>
<span class="t" id="r_terms" style="top:379.11px;font-size:8.85px;font-weight:700;color:#27272a;letter-spacing:0.000px;left:781px;">Terms</span>
<span class="t" id="r_adj2" style="top:378.98px;font-size:9.0px;font-weight:400;color:#3f3f46;letter-spacing:0.000px;-webkit-text-stroke:0.3px currentColor;left:972.6px;">Adjust</span>
<span class="t" id="r_search" style="top:402.80px;font-size:9.1px;font-weight:400;color:#71717a;letter-spacing:0.000px;left:806.3px;">Search</span>
<span class="t" id="r_all" style="top:430.18px;font-size:9.0px;font-weight:400;color:#7c5cc4;letter-spacing:0.000px;-webkit-text-stroke:0.3px currentColor;left:791px;">All</span>
<span class="t" id="r_76" style="top:430.67px;font-size:7px;font-weight:400;color:#ffffff;letter-spacing:0.000px;-webkit-text-stroke:0.3px currentColor;left:808px;">76</span>
<span class="t" id="r_hds" style="top:430.18px;font-size:9.0px;font-weight:400;color:#3f3f46;letter-spacing:0.000px;-webkit-text-stroke:0.3px currentColor;left:840.3px;">Headings</span>
<span class="t" id="r_5" style="top:430.67px;font-size:7px;font-weight:400;color:#ffffff;letter-spacing:0.000px;-webkit-text-stroke:0.3px currentColor;left:886.9px;">5</span>
<span class="t" id="r_nlp" style="top:430.18px;font-size:9.0px;font-weight:400;color:#3f3f46;letter-spacing:0.000px;-webkit-text-stroke:0.3px currentColor;left:914.5px;">NLP</span>
<span class="t" id="r_75" style="top:430.67px;font-size:7px;font-weight:400;color:#ffffff;letter-spacing:0.000px;-webkit-text-stroke:0.3px currentColor;left:938.6px;">75</span>
<span class="t" id="p1a" style="top:461.64px;font-size:8.7px;font-weight:400;color:#5b4b4b;letter-spacing:0.000px;left:790.1px;">content marketing what is</span>
<span class="t" id="p1b" style="top:461.64px;font-size:8.7px;font-weight:400;color:#5b4b4b;letter-spacing:0.000px;left:900px;">2/1</span>
<span class="t" id="p2a" style="top:483.64px;font-size:8.7px;font-weight:400;color:#5b4b4b;letter-spacing:0.000px;left:790.1px;">content marketing</span>
<span class="t" id="p2b" style="top:483.64px;font-size:8.7px;font-weight:400;color:#5b4b4b;letter-spacing:0.000px;left:870.6px;">66/32–49</span>
<span class="t" id="p3a" style="top:505.64px;font-size:8.7px;font-weight:400;color:#5b4b4b;letter-spacing:0.000px;left:790.1px;">content marketing strategy</span>
<span class="t" id="p3b" style="top:505.64px;font-size:8.7px;font-weight:400;color:#5b4b4b;letter-spacing:0.000px;left:905px;">9/4–7</span>
<span class="t" id="p4a" style="top:527.64px;font-size:8.7px;font-weight:400;color:#5b5040;letter-spacing:0.000px;left:790.1px;">social media platforms</span>
<span class="t" id="p4b" style="top:527.64px;font-size:8.7px;font-weight:400;color:#5b5040;letter-spacing:0.000px;left:887px;">1/2–4</span>
<span class="t" id="p5a" style="top:549.14px;font-size:8.7px;font-weight:400;color:#3f5a48;letter-spacing:0.000px;left:790.1px;">social media posts</span>
<span class="t" id="p5b" style="top:549.14px;font-size:8.7px;font-weight:400;color:#3f5a48;letter-spacing:0.000px;left:871.8px;">3/2–5</span>
</div></body></html>
